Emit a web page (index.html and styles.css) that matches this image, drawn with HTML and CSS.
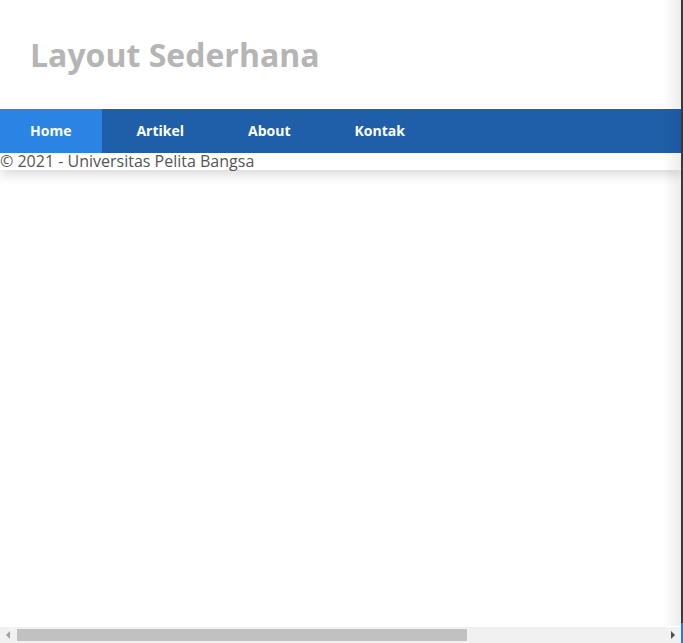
FILE: index.html
```html
<!DOCTYPE html>
<html lang="id">
<head>
<meta charset="utf-8">
<title>Layout Sederhana</title>
<link rel="stylesheet" href="styles.css">
</head>
<body>
<div class="container">
  <header class="header">
    <h1 class="title">Layout Sederhana</h1>
  </header>
  <nav class="nav">
    <a href="#" class="nav-link active">Home</a>
    <a href="#" class="nav-link">Artikel</a>
    <a href="#" class="nav-link">About</a>
    <a href="#" class="nav-link">Kontak</a>
  </nav>
  <footer class="footer">&copy; 2021 - Universitas Pelita Bangsa</footer>
</div>
<div class="edge-shade"></div>
<div class="edge-line"></div>
<div class="hscroll">
  <span class="arrow arrow-left"></span>
  <span class="thumb"></span>
  <span class="arrow arrow-right"></span>
</div>
<div class="edge-blue"></div>
</body>
</html>
```
FILE: styles.css
```css
html, body {
  margin: 0;
  padding: 0;
  background: #fff;
}
body {
  font-family: "Open Sans", "Liberation Sans", sans-serif;
  color: #555;
  height: 643px;
  overflow: hidden;
}
.container {
  background: #fff;
  box-shadow: 0 4px 12px rgba(0, 0, 0, 0.16);
}
.header {
  padding: 30px 31px;
  height: 49px;
}
.title {
  margin: 0;
  font-size: 32px;
  line-height: 49px;
  font-weight: 700;
  color: #b5b5b5;
  position: relative;
  left: -1px;
}
.nav {
  display: flex;
  gap: 4px;
  background: #1f5faa;
  height: 44px;
  line-height: 44px;
  font-size: 14px;
}
.nav-link {
  padding: 0 30px;
  color: #fff;
  font-weight: 700;
  text-decoration: none;
}
.nav-link.active {
  background: #2b83e4;
  padding-right: 31px;
}
.footer {
  font-size: 16px;
  line-height: 17px;
  color: #555;
}
.edge-shade {
  position: fixed;
  top: 0;
  bottom: 17px;
  right: 2px;
  width: 18px;
  background: linear-gradient(to right, rgba(0,0,0,0), rgba(0,0,0,0.07));
  pointer-events: none;
}
.edge-line {
  position: fixed;
  top: 0;
  bottom: 0;
  right: 0;
  width: 2px;
  background: #3a3a3a;
}
.edge-blue {
  position: fixed;
  bottom: 0;
  right: 0;
  width: 2px;
  height: 20px;
  background: #1a7fd6;
}
.hscroll {
  position: fixed;
  left: 0;
  right: 2px;
  bottom: 0;
  height: 16px;
  background: #f1f1f1;
}
.thumb {
  position: absolute;
  left: 17px;
  top: 2px;
  width: 450px;
  height: 12px;
  background: #c1c1c1;
}
.arrow {
  position: absolute;
  top: 4px;
  width: 0;
  height: 0;
  border-top: 4px solid transparent;
  border-bottom: 4px solid transparent;
}
.arrow-left {
  left: 6px;
  border-right: 4px solid #a3a3a3;
}
.arrow-right {
  right: 6px;
  border-left: 4px solid #505050;
}
```
